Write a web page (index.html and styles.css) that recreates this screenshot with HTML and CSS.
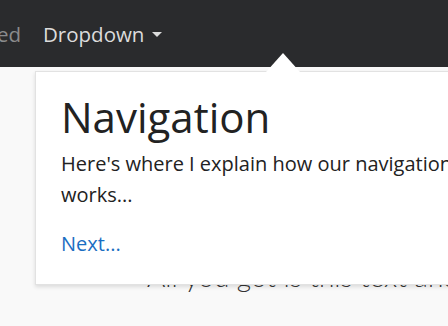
FILE: index.html
```html
<!DOCTYPE html>
<html>
<head>
<meta charset="utf-8">
<link rel="stylesheet" href="styles.css">
</head>
<body>
<nav class="navbar">
  <a class="nav-link muted">Disabled</a>
  <a class="nav-link active">Dropdown <span class="caret"></span></a>
</nav>
<main class="content">
  <p class="lead">All you got is this text and nothing else</p>
</main>
<div class="popover">
  <div class="arrow"></div>
  <h1 class="pop-title">Navigation</h1>
  <p class="pop-text">Here's where I explain how our navigation works...</p>
  <a class="pop-next">Next...</a>
</div>
</body>
</html>
```
FILE: styles.css
```css
html, body {
  margin: 0;
  padding: 0;
}
body {
  background: #f9f9f9;
  font-family: "Open Sans", "Noto Sans", sans-serif;
  color: #222;
  width: 448px;
  height: 326px;
  overflow: hidden;
  position: relative;
}
.navbar {
  height: 67px;
  background: #2a2b2d;
  display: flex;
  align-items: center;
  gap: 22px;
  margin-left: -62px;
  font-size: 20.5px;
}
.nav-link {
  display: flex;
  align-items: center;
  gap: 8px;
  white-space: nowrap;
}
.muted { color: #8a8b8c; }
.active { color: #dcdcdc; }
.caret {
  width: 0;
  height: 0;
  border-left: 5px solid transparent;
  border-right: 5px solid transparent;
  border-top: 5px solid #dcdcdc;
  margin-top: 2px;
}
.content {
  padding: 0 0 0 147px;
}
.lead {
  margin: 192px 0 0;
  font-family: "Lato", sans-serif;
  font-weight: 300;
  font-size: 28px;
  color: #333;
  white-space: nowrap;
}
.popover {
  position: absolute;
  left: 35px;
  top: 71px;
  width: 440px;
  height: 214px;
  box-sizing: border-box;
  background: #fff;
  border: 1px solid #e2e2e2;
  box-shadow: 0 2px 4px rgba(0,0,0,0.12);
  padding: 19px 25px;
}
.arrow {
  position: absolute;
  top: -19px;
  left: 230px;
  width: 0;
  height: 0;
  border-left: 17px solid transparent;
  border-right: 17px solid transparent;
  border-bottom: 19px solid #fff;
}
.pop-title {
  margin: 0;
  font-size: 42px;
  font-weight: 400;
  line-height: 52px;
  color: #222;
}
.pop-text {
  margin: 5px 0 18px;
  font-size: 20px;
  line-height: 31px;
  color: #222;
  width: 440px;
}
.pop-next {
  font-size: 20px;
  line-height: 31px;
  color: #1a6ec2;
}
```
